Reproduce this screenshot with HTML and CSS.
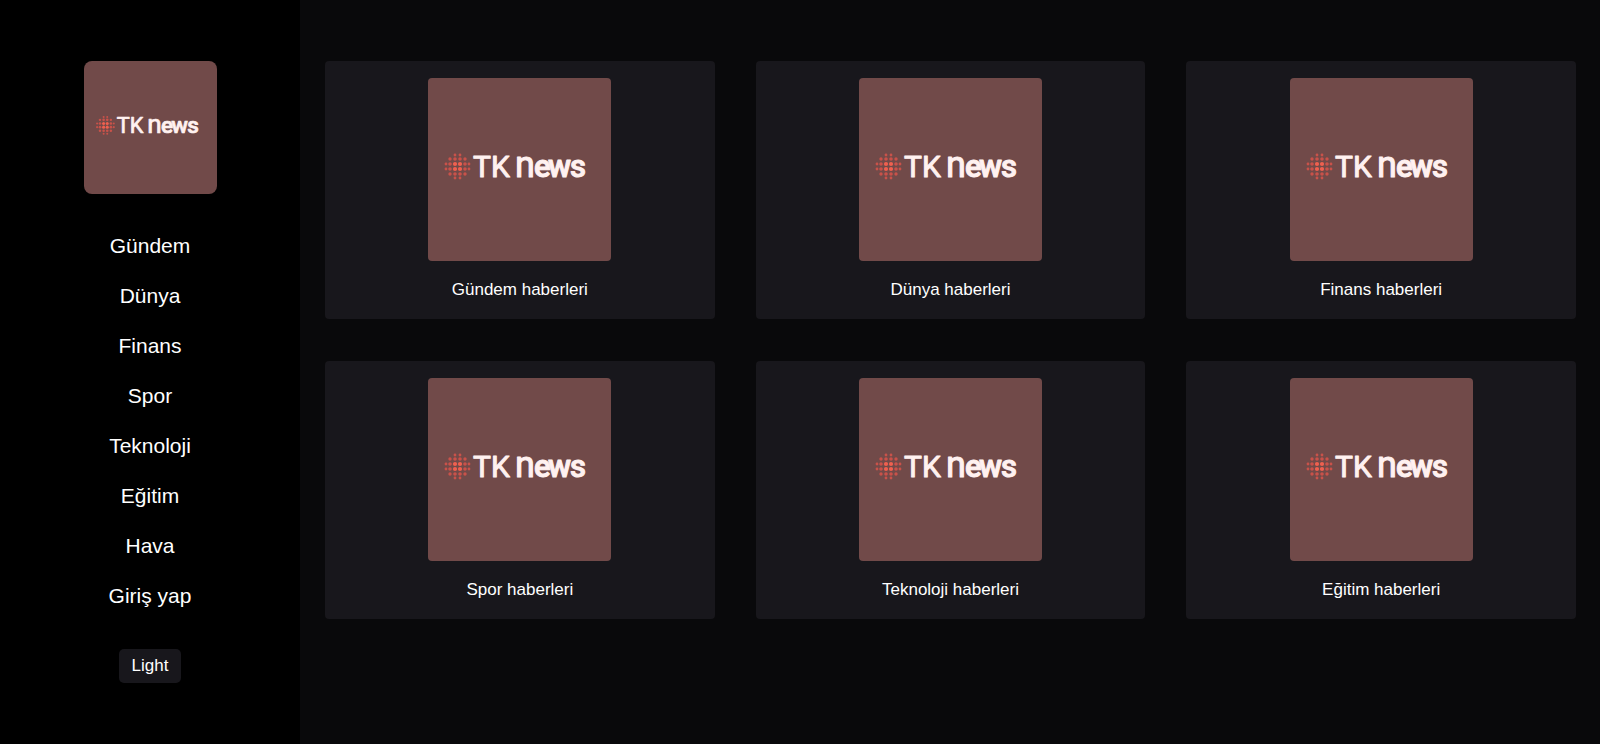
FILE: index.html
```html
<!DOCTYPE html>
<html lang="tr">
<head>
<meta charset="utf-8">
<title>TK News</title>
<link rel="stylesheet" href="styles.css">
</head>
<body>
<svg class="sprite" aria-hidden="true">
  <defs>
    <symbol id="logo" viewBox="0 0 183 183">
      <g fill="#c9524a">
        <circle cx="27" cy="77" r="1.4"/><circle cx="32" cy="77" r="1.4"/>
        <circle cx="22" cy="81" r="1.7"/><circle cx="27" cy="81" r="1.8"/><circle cx="32" cy="81" r="1.8"/><circle cx="37" cy="81" r="1.7"/>
        <circle cx="18" cy="86" r="1.4"/><circle cx="22" cy="86" r="1.8"/><circle cx="37" cy="86" r="1.8"/><circle cx="41" cy="86" r="1.4"/>
        <circle cx="18" cy="91" r="1.4"/><circle cx="22" cy="91" r="1.8"/><circle cx="37" cy="91" r="1.8"/><circle cx="41" cy="91" r="1.4"/>
        <circle cx="22" cy="96" r="1.7"/><circle cx="27" cy="96" r="1.8"/><circle cx="32" cy="96" r="1.8"/><circle cx="37" cy="96" r="1.7"/>
        <circle cx="27" cy="100" r="1.4"/><circle cx="32" cy="100" r="1.4"/>
      </g>
      <g fill="#f0604f">
        <circle cx="27" cy="86" r="2.1"/><circle cx="32" cy="86" r="2.1"/><circle cx="27" cy="91" r="2.1"/><circle cx="32" cy="91" r="2.1"/>
      </g>
      <text class="wordmark" y="99"><tspan x="45">TK </tspan><tspan class="wordmark-arch" x="87">n</tspan><tspan class="wordmark-tail" x="106 120 142">ews</tspan></text>
    </symbol>
  </defs>
</svg>
<div class="layout">
  <aside class="sidebar">
    <a class="brand" href="#" aria-label="TK News"><svg class="logo"><use href="#logo"/></svg></a>
    <nav class="menu">
      <a href="#">Gündem</a>
      <a href="#">Dünya</a>
      <a href="#">Finans</a>
      <a href="#">Spor</a>
      <a href="#">Teknoloji</a>
      <a href="#">Eğitim</a>
      <a href="#">Hava</a>
      <a href="#">Giriş yap</a>
    </nav>
    <button class="theme" type="button">Light</button>
  </aside>
  <main class="cards">
    <a class="card" href="#"><svg class="logo" aria-hidden="true"><use href="#logo"/></svg><span>Gündem haberleri</span></a>
    <a class="card" href="#"><svg class="logo" aria-hidden="true"><use href="#logo"/></svg><span>Dünya haberleri</span></a>
    <a class="card" href="#"><svg class="logo" aria-hidden="true"><use href="#logo"/></svg><span>Finans haberleri</span></a>
    <a class="card" href="#"><svg class="logo" aria-hidden="true"><use href="#logo"/></svg><span>Spor haberleri</span></a>
    <a class="card" href="#"><svg class="logo" aria-hidden="true"><use href="#logo"/></svg><span>Teknoloji haberleri</span></a>
    <a class="card" href="#"><svg class="logo" aria-hidden="true"><use href="#logo"/></svg><span>Eğitim haberleri</span></a>
  </main>
</div>
</body>
</html>
```
FILE: styles.css
```css
* {
  box-sizing: border-box;
}

body {
  margin: 0;
  background: #09090b;
  color: #fff;
  font-family: "Liberation Sans", Arial, sans-serif;
  font-size: 17px;
}

a {
  color: inherit;
  text-decoration: none;
}

.sprite {
  position: absolute;
  width: 0;
  height: 0;
}

.layout {
  display: flex;
  min-height: 100vh;
}

.sidebar {
  flex: 0 0 300px;
  display: flex;
  flex-direction: column;
  align-items: center;
  padding: 61px 24px;
  background: #000;
}

.logo {
  display: block;
  width: 183px;
  height: 183px;
  border-radius: 4px;
  background: #714a49;
}

.brand .logo {
  width: 133px;
  height: 133px;
  border-radius: 8px;
}

.wordmark {
  font-family: Roboto, sans-serif;
  font-size: 30px;
  fill: #fff1f0;
  stroke: #fff1f0;
  stroke-width: 1px;
  stroke-linejoin: round;
}

.wordmark-arch {
  font-size: 36px;
}

.wordmark-tail {
  font-size: 31px;
  font-weight: 500;
}

.menu {
  display: flex;
  flex-direction: column;
  align-items: center;
  gap: 26px;
  margin: 40px 0 41px;
  font-size: 21px;
  line-height: 24px;
}

.theme {
  padding: 7px 13px;
  border: 0;
  border-radius: 5px;
  background: #18171c;
  color: inherit;
  font: inherit;
  line-height: 20px;
}

.cards {
  flex: 1;
  display: grid;
  grid-template-columns: repeat(3, 1fr);
  align-content: start;
  gap: 42px 41px;
  padding: 61px 24px 61px 25px;
}

.card {
  display: flex;
  flex-direction: column;
  align-items: center;
  gap: 17px;
  padding: 17px;
  border-radius: 4px;
  background: #18171c;
  line-height: 24px;
}
```
